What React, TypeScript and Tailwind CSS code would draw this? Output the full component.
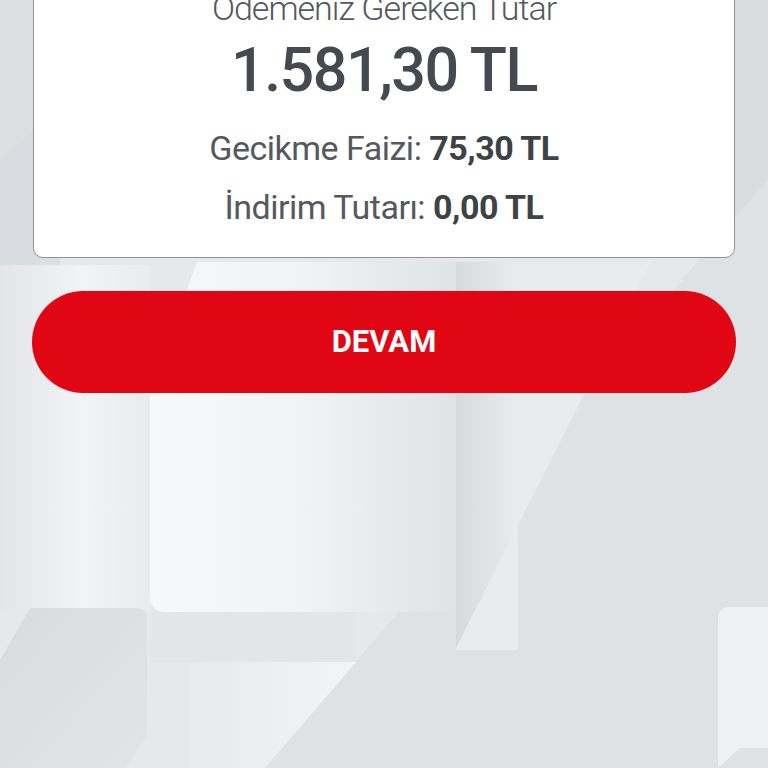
import React from "react";

type Row = { label: string; value: string };

const rows: Row[] = [
  { label: "Gecikme Faizi:", value: "75,30 TL" },
  { label: "İndirim Tutarı:", value: "0,00 TL" },
];

function Backdrop() {
  return (
    <svg
      className="absolute inset-0 h-full w-full"
      viewBox="0 0 768 768"
      preserveAspectRatio="none"
      aria-hidden="true"
    >
      <defs>
        <linearGradient id="lightA" x1="0" y1="0" x2="1" y2="0">
          <stop offset="0" stopColor="#f7f8f9" />
          <stop offset="0.5" stopColor="#f0f2f3" />
          <stop offset="1" stopColor="#e0e3e6" />
        </linearGradient>
        <linearGradient id="leftCol" x1="0" y1="0" x2="1" y2="0">
          <stop offset="0" stopColor="#e3e5e8" />
          <stop offset="0.55" stopColor="#f2f3f5" />
          <stop offset="1" stopColor="#e9ebed" />
        </linearGradient>
        <linearGradient id="darkB" x1="0" y1="0" x2="1" y2="1">
          <stop offset="0" stopColor="#d9dcdf" />
          <stop offset="1" stopColor="#e2e4e7" />
        </linearGradient>
        <linearGradient id="strip" x1="0" y1="0" x2="1" y2="0">
          <stop offset="0" stopColor="#d7dadd" />
          <stop offset="1" stopColor="#e9ebed" />
        </linearGradient>
        <linearGradient id="lightC" x1="0" y1="0" x2="1" y2="0">
          <stop offset="0" stopColor="#e7e9ec" />
          <stop offset="1" stopColor="#f3f4f6" />
        </linearGradient>
      </defs>
      <rect width="768" height="768" fill="#e6e8eb" />
      <rect x="0" y="0" width="60" height="265" fill="#dcdfe2" />
      <polygon points="0,160 40,125 40,265 0,265" fill="#d9dce0" />
      <rect x="0" y="265" width="150" height="345" fill="url(#leftCol)" />
      <polygon points="700,0 768,0 768,180 682,280 700,280" fill="#dadde0" />
      <polygon points="768,180 768,768 265,768" fill="#dfe2e5" />
      <rect x="456" y="262" width="62" height="388" fill="url(#strip)" />
      <polygon points="518,262 651,262 455,650 518,650" fill="#e9ebed" />
      <path
        d="M197 262 H456 V612 H166 Q150 612 150 596 V390 Z"
        fill="url(#lightA)"
      />
      <rect x="150" y="612" width="206" height="50" fill="#e3e6e9" />
      <path
        d="M30 608 H135 Q147 608 147 620 V735 L125 768 H0 V660 Z"
        fill="url(#darkB)"
      />
      <polygon points="190,662 356,662 265,768 190,768" fill="url(#lightC)" />
      <path
        d="M730 607 H768 V748 H740 L718 768 V619 Q718 607 730 607 Z"
        fill="#eef0f2"
      />
    </svg>
  );
}

function PaymentSummary() {
  return (
    <div className="-mt-[37px] mx-px flex flex-col items-center rounded-[10px] border-[1.5px] border-[#909296] bg-white pt-6 pb-[30px] text-center">
      <p className="text-[34px] leading-[40px] font-light tracking-[-1px] text-[#55595e]">
        Ödemeniz Gereken Tutar
      </p>
      <p className="mt-[7px] text-[61px] leading-[70px] font-medium tracking-[-1.5px] text-[#454a50]">
        1.581,30 TL
      </p>
      {rows.map((row, ind) => (
        <p
          key={ind}
          className={`text-[34px] leading-[40px] tracking-[-0.5px] text-[#55595e] ${
            ind === 0 ? "mt-[23px]" : "mt-[19px]"
          }`}
        >
          {row.label}{" "}
          <span className="font-bold text-[#3d4247]">{row.value}</span>
        </p>
      ))}
    </div>
  );
}

export default function App() {
  return (
    <div className="relative h-screen w-full overflow-hidden bg-[#e6e8eb] font-['Roboto','Liberation_Sans',sans-serif]">
      <Backdrop />
      <div className="relative flex flex-col px-8">
        <PaymentSummary />
        <button className="mt-[33px] flex h-[102px] items-center justify-center rounded-full bg-[#e10613] text-[31px] font-bold text-white">
          DEVAM
        </button>
      </div>
    </div>
  );
}
